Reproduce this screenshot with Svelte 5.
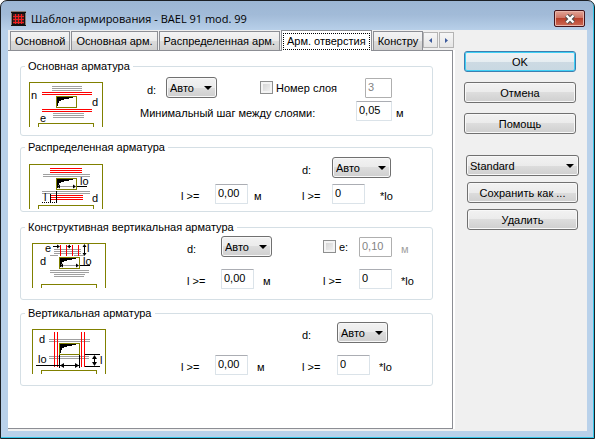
<script lang="ts">
	const tabs = ["Основной", "Основная арм.", "Распределенная арм.", "Арм. отверстия", "Констру"];
	let activeTab = $state(3);

	const barSizes = ["Авто", "6", "8", "10", "12"];
	let useLayer = $state(false);
	let useSpacing = $state(false);
	let layer = $state("3");
	let spacing = $state("0,10");
	let minGap = $state("0,05");
	let distLength = $state("0,00");
	let distRatio = $state("0");
	let consLength = $state("0,00");
	let consRatio = $state("0");
	let vertLength = $state("0,00");
	let vertRatio = $state("0");
</script>

{#snippet barSelect(id: string)}
	<span class="select">
		<select {id}>
			{#each barSizes as size}
				<option>{size}</option>
			{/each}
		</select>
	</span>
{/snippet}

{#snippet wall()}
	<path class="olive" d="M.5 45V.5h73V45M9.5 45v-3.500h55V45M27.500 14.500h20v11h-20z" />
	<path d="M28 15h16v1h-4v1h-5v1h-3v1h-2v2h-1v3h-1z" />
{/snippet}

<div class="window">
	<header>
		<svg class="app-icon" width="15" height="15" viewBox="0 0 15 15" aria-hidden="true">
			<path fill="#111" d="M0 0h15v15H0z" />
			<path fill="#8a8078" d="M0 0h15v1H0zM0 2h1v12H0zM14 2h1v12h-1z" />
			<path fill="#4a2020" d="M2 3h11v10H2z" />
			<path stroke="#f02020" d="M4.500 3v10M7.500 3v10M10.500 3v10M2 5.500h11M2 8.500h11M2 11.500h11" />
		</svg>
		<h1>Шаблон армирования - BAEL 91 mod. 99</h1>
		<button class="close" aria-label="Закрыть">
			<svg width="12" height="10" viewBox="0 0 12 10" aria-hidden="true">
				<path d="M2.500 1.500l7 7M9.500 1.500l-7 7" stroke="#54504f" stroke-width="4.500" />
				<path d="M2.500 1.500l7 7M9.500 1.500l-7 7" stroke="#fff" stroke-width="2.400" />
			</svg>
		</button>
	</header>

	<div class="body">
		<main>
			<div class="tabbar">
				<div class="tabs" role="tablist">
					{#each tabs as tab, i}
						<button class="tab" role="tab" class:active={i === activeTab} aria-selected={i === activeTab} onclick={() => (activeTab = i)}>
							<span>{tab}</span>
						</button>
					{/each}
				</div>
				<div class="scroller">
					<button aria-label="Назад"><svg width="3" height="5" viewBox="0 0 3 5"><path d="M3 0v5L0 2.500z" /></svg></button>
					<button aria-label="Вперед"><svg width="3" height="5" viewBox="0 0 3 5"><path d="M0 0v5l3-2.500z" /></svg></button>
				</div>
			</div>

			<div class="panel">
				<fieldset class="main-bars">
					<legend>Основная арматура</legend>
					<div class="group">
						<svg class="sketch" width="74" height="45" viewBox="0 0 74 45" aria-hidden="true">
							{@render wall()}
							<path class="gray" d="M23 4.500h30M23 6.500h30M23 8.500h30M24 31.500h31M24 33.500h31M24 35.500h31" />
							<path class="red" d="M13 10.500h50M13 12.500h50" />
							<path class="red" d="M13 27.500h50M13 29.500h50" />
							<text x="2" y="17">n</text>
							<text x="63" y="24">d</text>
							<text x="11" y="40">e</text>
						</svg>
						<div class="rows">
							<div class="row diameter">
								<label class="text" for="main-d">d:</label>
								{@render barSelect("main-d")}
								<label class="check"><input type="checkbox" bind:checked={useLayer} />Номер слоя</label>
								<input type="text" aria-label="Номер слоя" bind:value={layer} disabled={!useLayer} />
							</div>
							<div class="row gap">
								<label class="text" for="min-gap">Минимальный шаг между слоями:</label>
								<input id="min-gap" type="text" bind:value={minGap} />
								<span class="text">м</span>
							</div>
						</div>
					</div>
				</fieldset>

				<fieldset class="dist-bars">
					<legend>Распределенная арматура</legend>
					<div class="group">
						<svg class="sketch" width="74" height="45" viewBox="0 0 74 45" aria-hidden="true">
							{@render wall()}
							<path class="gray" d="M14 10.500h47M14 12.500h47M13 27.500h48M13 29.500h48M29 22.500h17" />
							<path class="red" d="M21 4.500h32M21 6.500h32M21 8.500h32" />
							<path class="red" d="M21 31.500h33M21 33.500h33M21 35.500h33" />
							<path class="black" d="M48 22.500h10M21.500 30v8M27.500 27v12" />
							<path class="black dashed" d="M13 38.500h14" />
							<path d="M28 22.500l3-2v4zM47 22.500l-3-2v4z" />
							<text x="51" y="21">lo</text>
							<text x="15" y="37">l</text>
							<text x="63" y="38">d</text>
						</svg>
						<div class="fields">
							<label class="text col-4" for="dist-d">d:</label>
							{@render barSelect("dist-d")}
							<label class="text col-1" for="dist-l">l &gt;=</label>
							<input id="dist-l" type="text" bind:value={distLength} />
							<span class="text">м</span>
							<label class="text col-4" for="dist-r">l &gt;=</label>
							<input id="dist-r" type="text" bind:value={distRatio} />
							<span class="text">*lo</span>
						</div>
					</div>
				</fieldset>

				<fieldset class="cons-bars">
					<legend>Конструктивная вертикальная арматура</legend>
					<div class="group">
						<svg class="sketch" width="74" height="45" viewBox="0 0 74 45" aria-hidden="true">
							{@render wall()}
							<path class="gray" d="M22 6.500h27M22 8.500h27M22 10.500h27M18 12.500h8M42 12.500h10M18 27.500h39M18 29.500h39M22 31.500h31M22 33.500h30M29 22.500h17" />
							<path class="red" d="M28.500 2v11M34.500 2v11M40.500 2v11M46.500 2v11" />
							<path class="black" d="M21 3.500h5M36 3.500h3M52.500 3v9M48 22.500h10" />
							<path d="M28 3.500l-3-2v4zM35 3.500l3-2v4zM52.500 1l-2 3h4zM52.500 13l-2-3h4zM28 22.500l3-2v4zM47 22.500l-3-2v4z" />
							<text x="13" y="9">e</text>
							<text x="8" y="22">d</text>
							<text x="55" y="9">l</text>
							<text x="51" y="22">lo</text>
						</svg>
						<div class="fields">
							<label class="text col-1" for="cons-d">d:</label>
							{@render barSelect("cons-d")}
							<label class="check col-4"><input type="checkbox" bind:checked={useSpacing} />e:</label>
							<input type="text" aria-label="e" bind:value={spacing} disabled={!useSpacing} />
							<span class="text" class:off={!useSpacing}>м</span>
							<label class="text col-1" for="cons-l">l &gt;=</label>
							<input id="cons-l" type="text" bind:value={consLength} />
							<span class="text">м</span>
							<label class="text col-4" for="cons-r">l &gt;=</label>
							<input id="cons-r" type="text" bind:value={consRatio} />
							<span class="text">*lo</span>
						</div>
					</div>
				</fieldset>

				<fieldset class="vert-bars">
					<legend>Вертикальная арматура</legend>
					<div class="group">
						<svg class="sketch" width="74" height="45" viewBox="0 0 74 45" aria-hidden="true">
							<path class="gray" d="M17 10.500h41M17 12.500h41M17 27.500h40M17 29.500h40" />
							{@render wall()}
							<path class="red" d="M22.500 3v35M25.500 3v35M49.500 3v35M52.500 3v35" />
							<path class="black" d="M4 36.500h43M27.500 26v13M47.500 26v13M53 25.500h15M53 37.500h15M62.500 27v9" />
							<path d="M28 36.500l4-2.500v5zM47 36.500l-4-2.500v5zM62.500 26l-2.500 4h5zM62.500 37l-2.500-4h5z" />
							<text x="7" y="14">d</text>
							<text x="6" y="34">lo</text>
							<text x="68" y="35">l</text>
						</svg>
						<div class="fields">
							<label class="text col-4" for="vert-d">d:</label>
							{@render barSelect("vert-d")}
							<label class="text col-1" for="vert-l">l &gt;=</label>
							<input id="vert-l" type="text" bind:value={vertLength} />
							<span class="text">м</span>
							<label class="text col-4" for="vert-r">l &gt;=</label>
							<input id="vert-r" type="text" bind:value={vertRatio} />
							<span class="text">*lo</span>
						</div>
					</div>
				</fieldset>
			</div>
		</main>

		<aside>
			<div class="actions">
				<button class="btn primary">OK</button>
				<button class="btn">Отмена</button>
				<button class="btn">Помощь</button>
			</div>
			<div class="presets">
				<span class="select">
					<select aria-label="Шаблон">
						<option>Standard</option>
					</select>
				</span>
				<button class="btn">Сохранить как ...</button>
				<button class="btn">Удалить</button>
			</div>
		</aside>
	</div>
</div>

<style>
	:global(body) {
		background: #fff;
	}

	.window {
		box-sizing: border-box;
		min-height: 100vh;
		display: flex;
		flex-direction: column;
		padding: 0 7px 7px;
		border: 1px solid #1b1f24;
		border-radius: 7px 7px 0 0;
		background: linear-gradient(#9cb6d4, #a2bbd8 14px, #b9d1ea 30px);
		box-shadow: inset -1px -1px #35c6e8;
		font-family: "Liberation Sans", Arial, sans-serif;
		font-size: 11px;
		line-height: 14px;
		color: #000;
	}

	header {
		display: flex;
		align-items: center;
		gap: 5px;
		height: 29px;
		padding: 6px 2px 0 3px;
		box-sizing: border-box;
	}

	h1 {
		flex: 1;
		margin: 0;
		font: 11px/16px "Open Sans", "Noto Sans", sans-serif;
	}

	button, select, input {
		font: inherit;
		color: inherit;
		box-sizing: border-box;
	}

	.close {
		display: flex;
		align-items: center;
		justify-content: center;
		width: 31px;
		height: 17px;
		padding: 0;
		border: 1px solid #43141b;
		border-radius: 2px;
		background: linear-gradient(#e3a597, #cf7565 45%, #b8402b 50%, #cd6a55);
		box-shadow: inset 0 0 0 1px #e9b5aa;
	}

	.body {
		flex: 1;
		display: flex;
		background: #f0f0f0;
	}

	main {
		flex: 1;
		min-width: 0;
		display: flex;
		flex-direction: column;
		padding-bottom: 2px;
	}

	.tabbar {
		display: flex;
		align-items: flex-start;
		height: 20px;
	}

	.tabs {
		flex: 1;
		min-width: 0;
		height: 21px;
		display: flex;
		align-items: flex-end;
		overflow: hidden;
		padding-left: 2px;
		position: relative;
		z-index: 1;
	}

	.tab {
		flex: none;
		height: 19px;
		margin-bottom: 1px;
		padding: 0 4px;
		border: 1px solid #8c8e94;
		border-bottom: 0;
		background: linear-gradient(#f3f3f3, #ebebeb 50%, #dcdcdc 50%, #cfcfcf);
		white-space: nowrap;
	}

	.tab + .tab {
		margin-left: 1px;
	}

	.tab.active {
		height: 21px;
		margin-bottom: 0;
		padding: 1px;
		background: #fff;
	}

	.tab.active span {
		display: block;
		padding: 1px 4px 2px;
		outline: 1px dotted #000;
		outline-offset: -1px;
	}

	.scroller {
		display: flex;
		gap: 1px;
		padding-top: 2px;
	}

	.scroller button {
		display: flex;
		align-items: center;
		justify-content: center;
		width: 15px;
		height: 16px;
		padding: 0;
		border: 1px solid #b4b4b4;
		background: linear-gradient(#f6f6f6, #e6e6e6);
		fill: #3c5a9c;
	}

	.panel {
		flex: 1;
		margin-right: 1px;
		padding: 8px 19px 16px 12px;
		border: solid #8c8e94;
		border-width: 1px 1px 1px 0;
		background: #fff;
		box-shadow: 2px 0 #fff;
	}

	fieldset {
		min-width: 0;
		margin: 0;
		padding: 0 0 10px 8px;
		border: 1px solid #d5dfe5;
		border-radius: 3px;
	}

	legend {
		margin-left: -4px;
		padding: 0 3px;
	}

	.group {
		display: grid;
		grid-template-columns: 111px 1fr;
		align-items: start;
	}

	.main-bars {
		padding-bottom: 8px;
	}

	.dist-bars {
		margin-top: 4px;
		padding-bottom: 2px;
	}

	.cons-bars {
		margin-top: 8px;
	}

	.vert-bars {
		margin-top: 6px;
	}

	.sketch {
		display: block;
		margin-top: 9px;
		overflow: visible;
		font-size: 11px;
		line-height: 11px;
	}

	.dist-bars .sketch {
		margin-top: 10px;
	}

	.cons-bars .sketch, .vert-bars .sketch {
		margin-left: 3px;
	}

	.olive, .gray, .red, .black {
		fill: none;
		shape-rendering: crispEdges;
	}

	.olive {
		stroke: #808000;
	}

	.gray {
		stroke: #a0a0a0;
	}

	.red {
		stroke: #f00;
	}

	.black {
		stroke: #000;
	}

	.dashed {
		stroke-dasharray: 1 1;
	}

	.rows {
		display: grid;
		row-gap: 3px;
		padding-top: 4px;
	}

	.row, .fields {
		display: grid;
		align-items: center;
	}

	.diameter {
		grid-template-columns: 26px 94px 105px 27px;
	}

	.diameter .text {
		padding-left: 7px;
	}

	.gap {
		grid-template-columns: 216px 36px auto;
		justify-content: start;
	}

	.gap span {
		padding-left: 4px;
	}

	.fields {
		padding-top: 2px;
		row-gap: 12px;
	}

	.dist-bars .fields {
		grid-template-columns: 34px 39px 48px 30px 48px 1fr;
		row-gap: 6px;
		padding: 3px 0 0 41px;
	}

	.cons-bars .fields {
		grid-template-columns: 34px 42px 60px 36px 42px 1fr;
		padding-left: 47px;
	}

	.vert-bars .fields {
		grid-template-columns: 34px 42px 45px 35px 42px 1fr;
		padding-left: 41px;
	}

	.col-1 {
		grid-column: 1;
	}

	.col-4 {
		grid-column: 4;
	}

	.text {
		padding-top: 4px;
	}

	.off {
		color: #a0a0a0;
	}

	.check {
		display: flex;
		align-items: center;
		gap: 3px;
	}

	input[type="checkbox"] {
		appearance: none;
		width: 13px;
		height: 13px;
		margin: 0;
		border: 1px solid #8e8f8f;
		background: linear-gradient(135deg, #cfcfcf, #f6f6f6);
		box-shadow: inset 0 0 0 2px #f4f4f4;
	}

	input[type="checkbox"]:checked {
		background: #3c5a9c;
	}

	input[type="text"] {
		width: 33px;
		height: 20px;
		padding: 0 2px 2px;
		border: 1px solid #dbe3e9;
		border-top-color: #abadb3;
		border-radius: 1px;
		background: #fff;
	}

	.row input[type="text"] {
		width: 100%;
	}

	input[type="text"]:disabled {
		border-color: #afafaf;
		color: #838383;
	}

	.select {
		position: relative;
		display: block;
		width: 51px;
	}

	.dist-bars .select {
		width: 59px;
	}

	.presets .select {
		width: auto;
	}

	.select::after {
		content: "";
		position: absolute;
		right: 5px;
		top: 9px;
		border: solid transparent;
		border-width: 4px 4px 0;
		border-top-color: #000;
		pointer-events: none;
	}

	select, .btn {
		display: block;
		width: 100%;
		height: 21px;
		border: 1px solid #707070;
		border-radius: 3px;
		background: linear-gradient(#f2f2f2, #ebebeb 50%, #dddddd 50%, #cfcfcf);
		box-shadow: inset 0 0 0 1px #f8f8f8;
	}

	select {
		appearance: none;
		padding: 0 3px;
	}

	.dist-bars .select, .cons-bars .select, .vert-bars .select {
		margin-right: -20px;
	}

	.btn {
		padding: 0;
	}

	.primary {
		border-color: #3c7fb1;
		background: linear-gradient(#f0f2f4, #e6edf1 50%, #cddae3 50%, #c8d8e2);
		box-shadow: inset 0 0 0 1px #3fd0f5;
	}

	aside {
		width: 115px;
		padding: 21px 8px 0 10px;
	}

	.actions {
		display: grid;
		gap: 10px;
		margin-right: 3px;
	}

	.presets {
		display: grid;
		gap: 6px;
		margin: 21px 0 0 2px;
	}

	.presets .btn {
		width: 111px;
		justify-self: center;
	}
</style>
